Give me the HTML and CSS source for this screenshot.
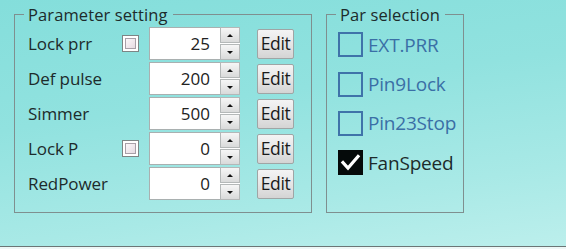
FILE: index.html
```html
<!DOCTYPE html>
<html>
<head>
<meta charset="utf-8">
<link rel="stylesheet" href="styles.css">
</head>
<body>
<div class="window">
  <div class="panel">
    <fieldset class="group params">
      <legend>Parameter setting</legend>
      <div class="row">
        <span class="label">Lock prr</span>
        <span class="cbslot"><span class="cb"></span></span>
        <span class="num"><span class="val">25</span><span class="spin"><span class="up"></span><span class="down"></span></span></span>
        <span class="btn">Edit</span>
      </div>
      <div class="row">
        <span class="label">Def pulse</span>
        <span class="cbslot"></span>
        <span class="num"><span class="val">200</span><span class="spin"><span class="up"></span><span class="down"></span></span></span>
        <span class="btn">Edit</span>
      </div>
      <div class="row">
        <span class="label">Simmer</span>
        <span class="cbslot"></span>
        <span class="num"><span class="val">500</span><span class="spin"><span class="up"></span><span class="down"></span></span></span>
        <span class="btn">Edit</span>
      </div>
      <div class="row">
        <span class="label">Lock P</span>
        <span class="cbslot"><span class="cb"></span></span>
        <span class="num"><span class="val">0</span><span class="spin"><span class="up"></span><span class="down"></span></span></span>
        <span class="btn">Edit</span>
      </div>
      <div class="row">
        <span class="label">RedPower</span>
        <span class="cbslot"></span>
        <span class="num"><span class="val">0</span><span class="spin"><span class="up"></span><span class="down"></span></span></span>
        <span class="btn">Edit</span>
      </div>
    </fieldset>
    <fieldset class="group sel">
      <legend>Par selection</legend>
      <div class="opt"><span class="box"></span><span class="otext">EXT.PRR</span></div>
      <div class="opt"><span class="box"></span><span class="otext">Pin9Lock</span></div>
      <div class="opt"><span class="box"></span><span class="otext">Pin23Stop</span></div>
      <div class="opt on"><span class="box checked"><svg width="25" height="25" viewBox="0 0 25 25"><polyline points="5,12.5 10,18 20,6.5" fill="none" stroke="#ffffff" stroke-width="3.2" stroke-linecap="square"/></svg></span><span class="otext">FanSpeed</span></div>
    </fieldset>
  </div>
  <div class="status"></div>
</div>
</body>
</html>
```

FILE: styles.css
```css
html, body {
  margin: 0;
  padding: 0;
}
body {
  width: 566px;
  height: 249px;
  overflow: hidden;
  font-family: "Open Sans", "Noto Sans", sans-serif;
  color: #1d2b2b;
}
.window {
  width: 566px;
  height: 249px;
  display: flex;
  flex-direction: column;
}
.panel {
  height: 247px;
  flex: none;
  box-sizing: border-box;
  border-bottom: 1px solid #6b7676;
  background: linear-gradient(172deg, #84dedb 0%, #91e2df 40%, #a8e9e6 75%, #bcefec 100%);
  display: flex;
  align-items: flex-start;
  gap: 14px;
  padding: 4px 0 0 14px;
}
.status {
  flex: 1;
  background: #eef7f6;
}
.group {
  margin: 0;
  box-sizing: border-box;
  height: 209px;
  border: 1px solid #7f8f8f;
  min-width: 0;
}
.group legend {
  font-size: 16.5px;
  line-height: 21px;
  padding: 0 5px 0 4px;
  color: #1d2b2b;
  letter-spacing: 0.1px;
}
.params {
  width: 298px;
  padding: 1px 0 0 13px;
}
.params legend {
  margin-left: -4px;
}
.sel {
  width: 138px;
  padding: 0 0 0 11px;
}
.sel legend {
  margin-left: -2px;
}
.row {
  height: 35px;
  display: flex;
  align-items: center;
}
.label {
  width: 94px;
  font-size: 17px;
  white-space: nowrap;
  letter-spacing: -0.1px;
}
.cbslot {
  width: 27px;
  height: 17px;
  display: flex;
}
.cb {
  width: 17px;
  height: 17px;
  box-sizing: border-box;
  border: 1px solid #7d8585;
  background: #ffffff;
  padding: 2px;
  display: flex;
}
.cb::before {
  content: "";
  flex: 1;
  border: 1px solid #a8a0a8;
  background: linear-gradient(135deg, #fbf7fa 0%, #e6dbe2 100%);
}
.num {
  display: flex;
  height: 33px;
  width: 91px;
}
.val {
  width: 71px;
  box-sizing: border-box;
  background: #ffffff;
  border: 1px solid #a9b0b0;
  border-right: none;
  font-size: 17px;
  text-align: right;
  padding-right: 10px;
  line-height: 31px;
  color: #222;
}
.spin {
  width: 20px;
  display: flex;
  flex-direction: column;
  gap: 1px;
  background: #ffffff;
}
.up, .down {
  flex: 1;
  box-sizing: border-box;
  border: 1px solid #b4b8b8;
  background: linear-gradient(#f6f6f6, #d9dada);
  display: flex;
  align-items: center;
  justify-content: center;
}
.up::after {
  content: "";
  border-left: 3px solid transparent;
  border-right: 3px solid transparent;
  border-bottom: 3px solid #111;
}
.down::after {
  content: "";
  border-left: 3px solid transparent;
  border-right: 3px solid transparent;
  border-top: 3px solid #111;
}
.btn {
  margin-left: 17px;
  width: 37px;
  height: 30px;
  box-sizing: border-box;
  border: 1px solid #9fa5a5;
  border-radius: 2px;
  background: linear-gradient(#f4f4f4 0%, #e6e6e6 50%, #d4d4d4 100%);
  font-size: 17.5px;
  line-height: 27px;
  text-align: center;
  color: #1a1a1a;
  letter-spacing: -0.4px;
}
.opt {
  height: 39.4px;
  display: flex;
  align-items: center;
}
.box {
  width: 25px;
  height: 25px;
  box-sizing: border-box;
  border: 2px solid #3f73a9;
  flex: none;
}
.box.checked {
  border: none;
  background: #050a0a;
}
.box svg {
  display: block;
}
.otext {
  margin-left: 5px;
  font-size: 19px;
  color: #3a6fa6;
  white-space: nowrap;
  letter-spacing: -0.2px;
}
.opt.on .otext {
  color: #1d2b2b;
}
```
